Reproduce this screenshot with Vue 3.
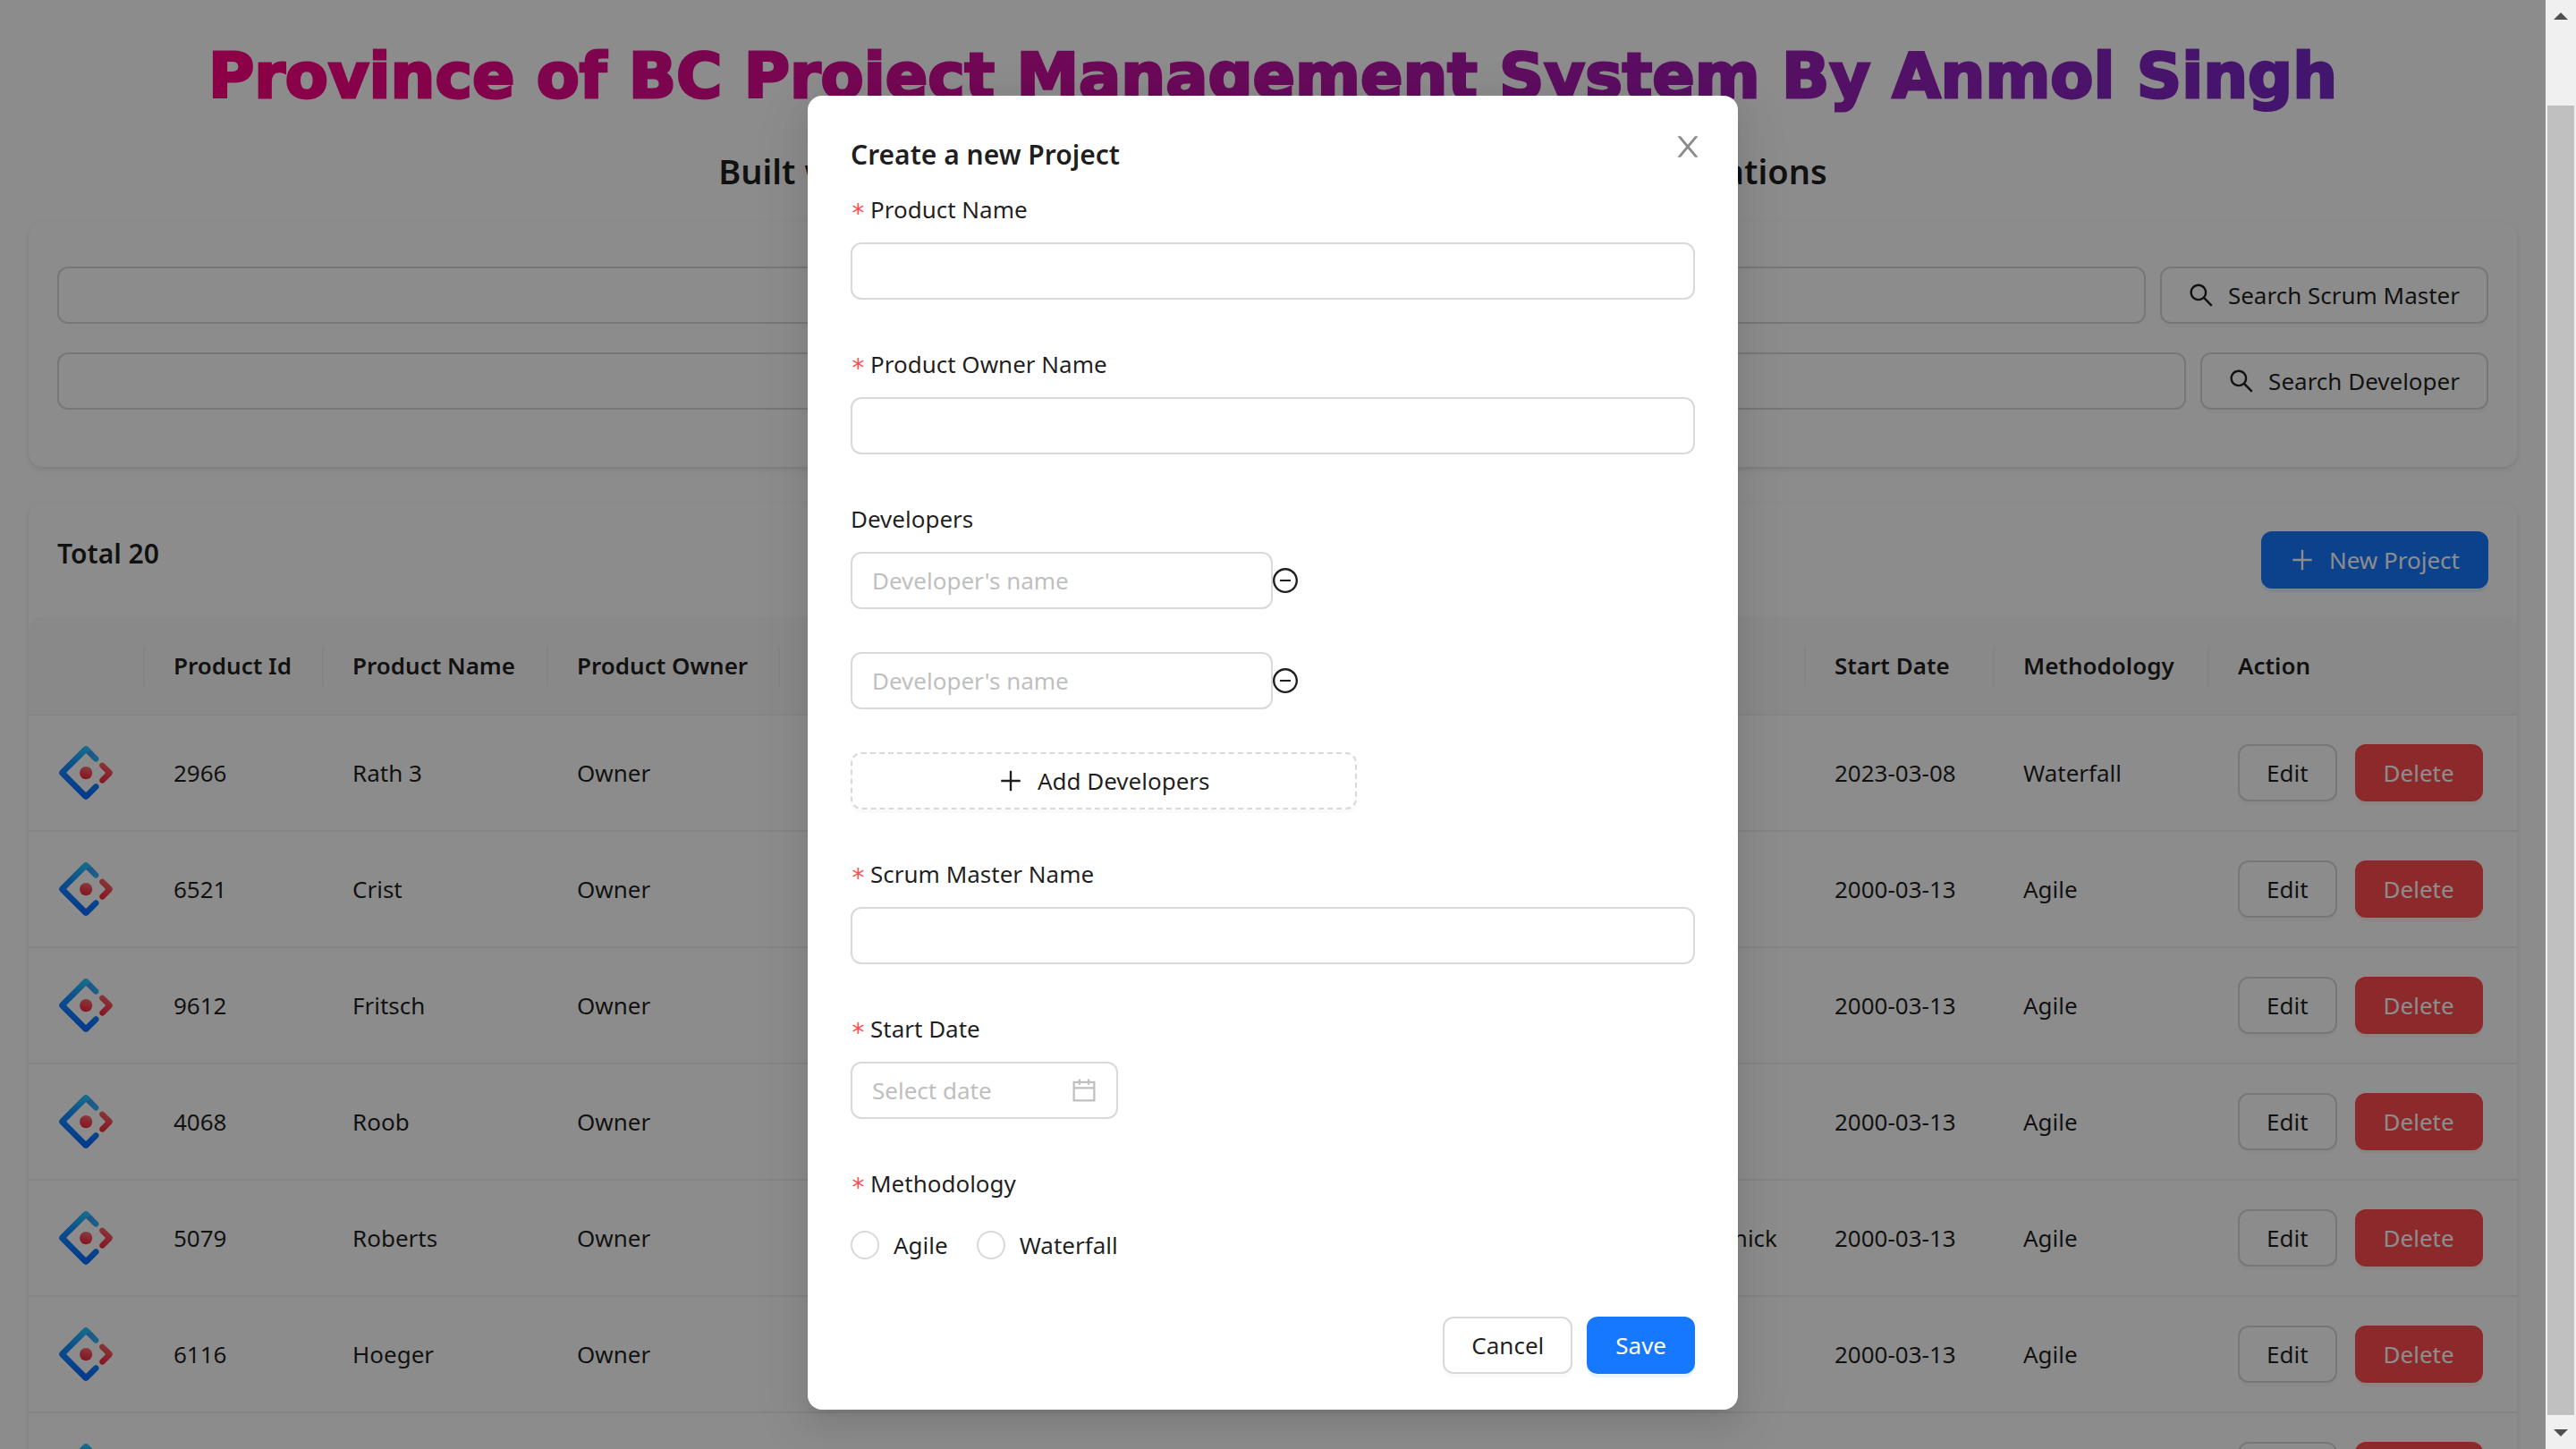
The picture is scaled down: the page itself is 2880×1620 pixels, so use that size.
<script setup>
import { ref } from 'vue'

const projects = [
  { id: 2966, name: 'Rath 3', owner: 'Owner', scrum: 'Keeling', devs: 'Ana Lemke, Joel Hane', date: '2023-03-08', method: 'Waterfall' },
  { id: 6521, name: 'Crist', owner: 'Owner', scrum: 'Hudson', devs: 'Rosa Kuhn, Ervin Beier', date: '2000-03-13', method: 'Agile' },
  { id: 9612, name: 'Fritsch', owner: 'Owner', scrum: 'Ebert', devs: 'Lila Mraz, Otis Kris', date: '2000-03-13', method: 'Agile' },
  { id: 4068, name: 'Roob', owner: 'Owner', scrum: 'Hirthe', devs: 'Dan Veum, Ida Rice', date: '2000-03-13', method: 'Agile' },
  { id: 5079, name: 'Roberts', owner: 'Owner', scrum: 'Bruen', devs: 'Thora Runolfsson, Kaleb Bartoletti, Moises Sauer, Kim Minnick', date: '2000-03-13', method: 'Agile' },
  { id: 6116, name: 'Hoeger', owner: 'Owner', scrum: 'Borer', devs: 'Max Bode, Eva Dare', date: '2000-03-13', method: 'Agile' },
  { id: 7340, name: 'Kemmer', owner: 'Owner', scrum: 'Lynch', devs: 'Sam Orn, Lee Funk', date: '2000-03-13', method: 'Agile' }
]

const searches = ref([
  { id: 'search-scrum', label: 'Search Scrum Master', value: '' },
  { id: 'search-dev', label: 'Search Developer', value: '' }
])

const developers = ref(['', ''])
const methodology = ref('')

const icons = {
  search: 'M909.6 854.5L649.9 594.8C690.2 542.7 712 479 712 412c0-80.2-31.3-155.4-87.9-212.1-56.6-56.7-132-87.9-212.1-87.9s-155.5 31.3-212.1 87.9C143.2 256.5 112 331.8 112 412c0 80.1 31.3 155.5 87.9 212.1C256.5 680.8 331.8 712 412 712c67 0 130.6-21.8 182.7-62l259.7 259.6a8.2 8.2 0 0011.6 0l43.6-43.5a8.2 8.2 0 000-11.6zM570.4 570.4C528 612.7 471.8 636 412 636s-116-23.3-158.4-65.6C211.3 528 188 471.8 188 412s23.3-116.1 65.6-158.4C296 211.3 352.2 188 412 188s116.1 23.2 158.4 65.6S636 352.2 636 412s-23.3 116.1-65.6 158.4z',
  plus: 'M482 152h60q8 0 8 8v704q0 8-8 8h-60q-8 0-8-8V160q0-8 8-8zM176 474h672q8 0 8 8v60q0 8-8 8H176q-8 0-8-8v-60q0-8 8-8z',
  minus: 'M696 480H328c-4.4 0-8 3.6-8 8v48c0 4.4 3.6 8 8 8h368c4.4 0 8-3.6 8-8v-48c0-4.4-3.6-8-8-8zM512 64C264.6 64 64 264.6 64 512s200.6 448 448 448 448-200.6 448-448S759.4 64 512 64zm0 820c-205.4 0-372-166.6-372-372s166.6-372 372-372 372 166.6 372 372-166.6 372-372 372z',
  calendar: 'M880 184H712v-64c0-4.4-3.6-8-8-8h-56c-4.4 0-8 3.6-8 8v64H384v-64c0-4.4-3.6-8-8-8h-56c-4.4 0-8 3.6-8 8v64H144c-17.7 0-32 14.3-32 32v664c0 17.7 14.3 32 32 32h736c17.7 0 32-14.3 32-32V216c0-17.7-14.3-32-32-32zm-40 656H184V460h656v380zM184 392V256h128v48c0 4.4 3.6 8 8 8h56c4.4 0 8-3.6 8-8v-48h256v48c0 4.4 3.6 8 8 8h56c4.4 0 8-3.6 8-8v-48h128v136H184z',
  close: 'M563.8 512l262.5-312.9c4.4-5.2.7-13.1-6.1-13.1h-79.8c-4.7 0-9.2 2.1-12.3 5.7L511.6 449.8 295.1 191.7c-3-3.6-7.5-5.7-12.3-5.7H203c-6.8 0-10.5 7.9-6.1 13.1L459.4 512 196.9 824.9A7.95 7.95 0 00203 838h79.8c4.7 0 9.2-2.1 12.3-5.7l216.5-258.1 216.5 258.1c3 3.6 7.5 5.7 12.3 5.7h79.8c6.8 0 10.5-7.9 6.1-13.1L563.8 512z'
}
</script>

<template>
  <div class="screen">
    <div class="page">
      <h1>Province of BC Project Management System By Anmol Singh</h1>
      <h2 class="subtitle">Built with Ant Design, React, Redux Toolkit, using CRUD Operations</h2>

      <section class="card search-card">
        <div v-for="s in searches" :key="s.id" class="search-row">
          <input :id="s.id" v-model="s.value" class="field" type="text" :aria-label="s.label" />
          <button class="btn" type="button">
            <svg class="icon" viewBox="64 64 896 896" aria-hidden="true"><path :d="icons.search" /></svg>
            {{ s.label }}
          </button>
        </div>
      </section>

      <section class="card">
        <header class="table-head">
          <h3>Total 20</h3>
          <button class="btn primary" type="button">
            <svg class="icon" viewBox="64 64 896 896" aria-hidden="true"><path :d="icons.plus" /></svg>
            New Project
          </button>
        </header>
        <table>
          <colgroup>
            <col class="c-logo" /><col class="c-id" /><col class="c-name" /><col class="c-owner" />
            <col /><col class="c-devs" /><col class="c-date" /><col class="c-method" /><col class="c-action" />
          </colgroup>
          <thead>
            <tr>
              <th></th><th>Product Id</th><th>Product Name</th><th>Product Owner</th>
              <th>Scrum Master</th><th>Developers</th><th>Start Date</th><th>Methodology</th><th>Action</th>
            </tr>
          </thead>
          <tbody>
            <tr v-for="p in projects" :key="p.id">
              <td><svg class="logo" viewBox="0 0 200 200" aria-hidden="true"><use href="#brand" /></svg></td>
              <td>{{ p.id }}</td>
              <td>{{ p.name }}</td>
              <td>{{ p.owner }}</td>
              <td>{{ p.scrum }}</td>
              <td>{{ p.devs }}</td>
              <td>{{ p.date }}</td>
              <td>{{ p.method }}</td>
              <td>
                <div class="actions">
                  <button class="btn" type="button">Edit</button>
                  <button class="btn danger" type="button">Delete</button>
                </div>
              </td>
            </tr>
          </tbody>
        </table>
      </section>

      <div class="mask">
        <form class="dialog" role="dialog" aria-labelledby="dialog-title" @submit.prevent>
          <button class="close" type="button" aria-label="Close">
            <svg viewBox="64 64 896 896" aria-hidden="true"><path :d="icons.close" /></svg>
          </button>
          <h3 id="dialog-title" class="dialog-title">Create a new Project</h3>

          <div class="item">
            <label class="label" for="product"><span class="star">*</span>Product Name</label>
            <input id="product" class="field" type="text" />
          </div>
          <div class="item">
            <label class="label" for="owner"><span class="star">*</span>Product Owner Name</label>
            <input id="owner" class="field" type="text" />
          </div>
          <div class="item">
            <label class="label" for="dev-0">Developers</label>
            <div class="dev-list">
              <div v-for="(d, i) in developers" :key="i" class="dev-row">
                <input :id="'dev-' + i" v-model="developers[i]" class="field" type="text" placeholder="Developer's name" />
                <button class="minus" type="button" aria-label="Remove developer">
                  <svg class="icon" viewBox="64 64 896 896" aria-hidden="true"><path :d="icons.minus" /></svg>
                </button>
              </div>
              <button class="btn dashed" type="button">
                <svg class="icon" viewBox="64 64 896 896" aria-hidden="true"><path :d="icons.plus" /></svg>
                Add Developers
              </button>
            </div>
          </div>
          <div class="item">
            <label class="label" for="scrum"><span class="star">*</span>Scrum Master Name</label>
            <input id="scrum" class="field" type="text" />
          </div>
          <div class="item">
            <label class="label" for="date"><span class="star">*</span>Start Date</label>
            <div class="field picker">
              <input id="date" type="text" placeholder="Select date" />
              <svg class="icon" viewBox="64 64 896 896" aria-hidden="true"><path :d="icons.calendar" /></svg>
            </div>
          </div>
          <div class="item">
            <span id="method-label" class="label"><span class="star">*</span>Methodology</span>
            <div class="radios" role="radiogroup" aria-labelledby="method-label">
              <label v-for="m in ['Agile', 'Waterfall']" :key="m" class="radio">
                <input v-model="methodology" type="radio" name="methodology" :value="m" />{{ m }}
              </label>
            </div>
          </div>

          <footer class="dialog-foot">
            <button class="btn" type="button">Cancel</button>
            <button class="btn primary" type="submit">Save</button>
          </footer>
        </form>
      </div>
    </div>

    <div class="scrollbar" aria-hidden="true">
      <svg viewBox="0 0 16 8"><path d="M8 0L16 8H0z" /></svg>
      <div class="thumb"></div>
      <svg viewBox="0 0 16 8"><path d="M0 0H16L8 8z" /></svg>
    </div>

    <svg class="defs" aria-hidden="true">
      <defs>
        <linearGradient id="g1" x1="62.1%" y1="0%" x2="108.2%" y2="37.9%">
          <stop stop-color="#4285eb" offset="0%" /><stop stop-color="#2ec7ff" offset="100%" />
        </linearGradient>
        <linearGradient id="g2" x1="69.6%" y1="0%" x2="54%" y2="108.5%">
          <stop stop-color="#29cdff" offset="0%" /><stop stop-color="#148eff" offset="37.9%" /><stop stop-color="#0a60ff" offset="100%" />
        </linearGradient>
        <linearGradient id="g3" x1="69.7%" y1="-13%" x2="16.7%" y2="117.4%">
          <stop stop-color="#fa816e" offset="0%" /><stop stop-color="#f74a5c" offset="41.5%" /><stop stop-color="#f51d2c" offset="100%" />
        </linearGradient>
        <linearGradient id="g4" x1="68.1%" y1="-35.7%" x2="30.4%" y2="114.9%">
          <stop stop-color="#fa8e7d" offset="0%" /><stop stop-color="#f74a5c" offset="51.3%" /><stop stop-color="#f51d2c" offset="100%" />
        </linearGradient>
        <g id="brand">
          <path fill="url(#g1)" d="M91.59 4.18L4.18 91.51C-.52 96.21-.52 103.79 4.18 108.49L91.59 195.82C96.29 200.52 103.88 200.52 108.58 195.82L145.23 159.2C149.43 155 149.43 148.18 145.23 143.98C141.02 139.77 134.19 139.77 129.99 143.98L102.2 171.74C101.03 172.91 99.26 172.91 98.09 171.74L28.29 101.99C27.12 100.82 27.12 99.05 28.29 97.88L98.09 28.14C99.26 26.97 101.03 26.97 102.2 28.14L129.99 55.9C134.19 60.1 141.02 60.1 145.23 55.9C149.43 51.69 149.43 44.88 145.23 40.67L108.58 4.06C103.86 -.54 96.27 -.5 91.59 4.18Z" />
          <path fill="url(#g2)" d="M91.59 4.18L4.18 91.51C-.52 96.21-.52 103.79 4.18 108.49L91.59 195.82C96.29 200.52 103.88 200.52 108.58 195.82L145.23 159.2C149.43 155 149.43 148.18 145.23 143.98C141.02 139.77 134.19 139.77 129.99 143.98L102.2 171.74C101.03 172.91 99.26 172.91 98.09 171.74L28.29 101.99C27.12 100.82 27.12 99.05 28.29 97.88L98.09 28.14C101 25.63 105.75 20.54 112.73 19.35C117.92 18.47 123.59 20.41 129.74 25.19L108.58 4.06C103.86 -.54 96.27 -.5 91.59 4.18Z" />
          <path fill="url(#g3)" d="M153.69 135.85C157.89 140.06 164.72 140.06 168.93 135.85L195.96 108.84C200.66 104.15 200.66 96.56 195.96 91.87L168.69 64.72C164.47 60.52 157.65 60.52 153.44 64.73C149.23 68.94 149.23 75.75 153.44 79.96L171.85 98.36C173.02 99.53 173.02 101.3 171.85 102.47L153.69 120.63C149.48 124.83 149.48 131.65 153.69 135.85Z" />
          <circle fill="url(#g4)" cx="100.5" cy="100.4" r="23.6" />
        </g>
      </defs>
    </svg>
  </div>
</template>

<style>
body {
  margin: 0;
  background: #fff;
}
</style>

<style scoped>
* {
  box-sizing: border-box;
}

.screen {
  display: flex;
  height: 100vh;
  overflow: hidden;
  font: 26px/44px "Noto Sans", "Open Sans", sans-serif;
  color: rgba(0, 0, 0, 0.88);
}

.page {
  position: relative;
  flex: 1;
  min-width: 0;
  padding: 37px 32px 0;
  overflow: hidden;
}

h1,
h2,
h3 {
  margin: 0;
}

h1 {
  width: fit-content;
  margin: 0 auto 30px;
  font: 700 70px/96px "DejaVu Sans", sans-serif;
  white-space: nowrap;
  color: transparent;
  -webkit-text-stroke: 3px transparent;
  background: linear-gradient(to left, #7928ca, #ff0080);
  -webkit-background-clip: text;
  background-clip: text;
}

.subtitle {
  margin-bottom: 29px;
  font-size: 38px;
  font-weight: 600;
  line-height: 56px;
  text-align: center;
  white-space: nowrap;
}

h3 {
  font-size: 30px;
  font-weight: 600;
  line-height: 50px;
}

.card {
  margin-bottom: 40px;
  background: #fff;
  border-radius: 16px;
  box-shadow: 0 2px 4px rgba(0, 0, 0, 0.06), 0 2px 12px -2px rgba(0, 0, 0, 0.04), 0 4px 8px rgba(0, 0, 0, 0.04);
}

.search-card {
  display: flex;
  flex-direction: column;
  gap: 32px;
  padding: 50px 32px 64px;
}

.search-row {
  display: flex;
  gap: 16px;
}

.field {
  flex: 1;
  width: 100%;
  min-width: 0;
  height: 64px;
  padding: 0 22px;
  font: inherit;
  color: inherit;
  background: #fff;
  border: 2px solid #d9d9d9;
  border-radius: 12px;
}

input::placeholder {
  color: #bfbfbf;
  opacity: 1;
}

.btn {
  display: inline-flex;
  align-items: center;
  justify-content: center;
  gap: 16px;
  height: 64px;
  padding: 0 30px;
  font: inherit;
  color: inherit;
  white-space: nowrap;
  background: #fff;
  border: 2px solid #d9d9d9;
  border-radius: 12px;
  box-shadow: 0 4px 0 rgba(0, 0, 0, 0.02);
}

.primary {
  color: #fff;
  background: #1677ff;
  border-color: #1677ff;
  box-shadow: 0 4px 0 rgba(5, 145, 255, 0.1);
}

.danger {
  color: #fff;
  background: #ff4d4f;
  border-color: #ff4d4f;
  box-shadow: 0 4px 0 rgba(255, 38, 5, 0.06);
}

.icon {
  flex: none;
  width: 28px;
  height: 28px;
  fill: currentColor;
}

.table-head {
  display: flex;
  align-items: flex-start;
  justify-content: space-between;
  padding: 32px;
}

table {
  width: 100%;
  border-collapse: separate;
  border-spacing: 0;
}

.c-logo { width: 130px; }
.c-id { width: 200px; }
.c-name { width: 251px; }
.c-owner { width: 259px; }
.c-devs { width: 1px; }
.c-date { width: 211px; }
.c-method { width: 240px; }
.c-action { width: 344px; }

th,
td {
  padding: 0 32px;
  text-align: left;
  white-space: nowrap;
  border-bottom: 2px solid #f0f0f0;
}

th {
  position: relative;
  height: 110px;
  font-weight: 600;
  background: #fafafa;
}

th:not(:last-child)::after {
  content: "";
  position: absolute;
  top: 32px;
  right: 0;
  width: 2px;
  height: 45px;
  background: #f0f0f0;
}

th:first-child {
  border-top-left-radius: 16px;
}

th:last-child {
  border-top-right-radius: 16px;
}

td {
  height: 130px;
}

.logo {
  display: block;
  width: 64px;
  height: 64px;
  padding: 2px;
}

.actions {
  display: flex;
  gap: 20px;
}

.mask {
  position: absolute;
  inset: 0;
  display: flex;
  align-items: flex-start;
  justify-content: center;
  padding-top: 107px;
  background: rgba(0, 0, 0, 0.45);
}

.dialog {
  position: relative;
  width: 1040px;
  padding: 41px 48px 40px;
  background: #fff;
  border-radius: 16px;
  box-shadow: 0 12px 32px rgba(0, 0, 0, 0.08), 0 6px 12px -8px rgba(0, 0, 0, 0.12), 0 18px 56px 16px rgba(0, 0, 0, 0.05);
}

.close {
  position: absolute;
  top: 35px;
  right: 34px;
  display: flex;
  align-items: center;
  justify-content: center;
  width: 44px;
  height: 44px;
  padding: 0;
  color: #8c8c8c;
  background: none;
  border: 0;
}

.close svg {
  width: 32px;
  height: 32px;
  fill: currentColor;
}

.dialog-title {
  margin-bottom: 12px;
}

.item {
  margin-bottom: 48px;
}

.label {
  display: flex;
  align-items: center;
  margin-bottom: 13px;
  line-height: 48px;
}

.star {
  width: 22px;
  font: 28px/38px "DejaVu Sans Mono", monospace;
  align-self: flex-end;
  color: #ff4d4f;
}

.dev-list {
  display: flex;
  flex-direction: column;
  gap: 48px;
}

.dev-row {
  display: flex;
  align-items: center;
}

.dev-row .field {
  flex: none;
  width: 50%;
}

.minus {
  display: flex;
  padding: 0;
  color: inherit;
  background: none;
  border: 0;
}

.dashed {
  width: 60%;
  border-style: dashed;
}

.picker {
  display: flex;
  align-items: center;
  width: 299px;
}

.picker input {
  flex: 1;
  min-width: 0;
  padding: 0;
  font: inherit;
  color: inherit;
  background: none;
  border: 0;
}

.picker .icon {
  color: #bfbfbf;
}

.radios {
  display: flex;
  gap: 32px;
  height: 64px;
}

.radio {
  display: flex;
  align-items: center;
  gap: 16px;
}

.radio input {
  width: 32px;
  height: 32px;
  margin: 0;
  appearance: none;
  background: #fff;
  border: 2px solid #d9d9d9;
  border-radius: 50%;
}

.dialog-foot {
  display: flex;
  justify-content: flex-end;
  gap: 16px;
}

.scrollbar {
  display: flex;
  flex-direction: column;
  align-items: center;
  justify-content: space-between;
  width: 34px;
  padding: 14px 0;
  background: #f0f0f0;
}

.scrollbar svg {
  width: 16px;
  height: 8px;
  fill: #505050;
}

.thumb {
  flex: 1;
  width: 30px;
  margin: 96px 0 16px;
  background: #c0c0c0;
}

.defs {
  position: absolute;
  width: 0;
  height: 0;
}
</style>
